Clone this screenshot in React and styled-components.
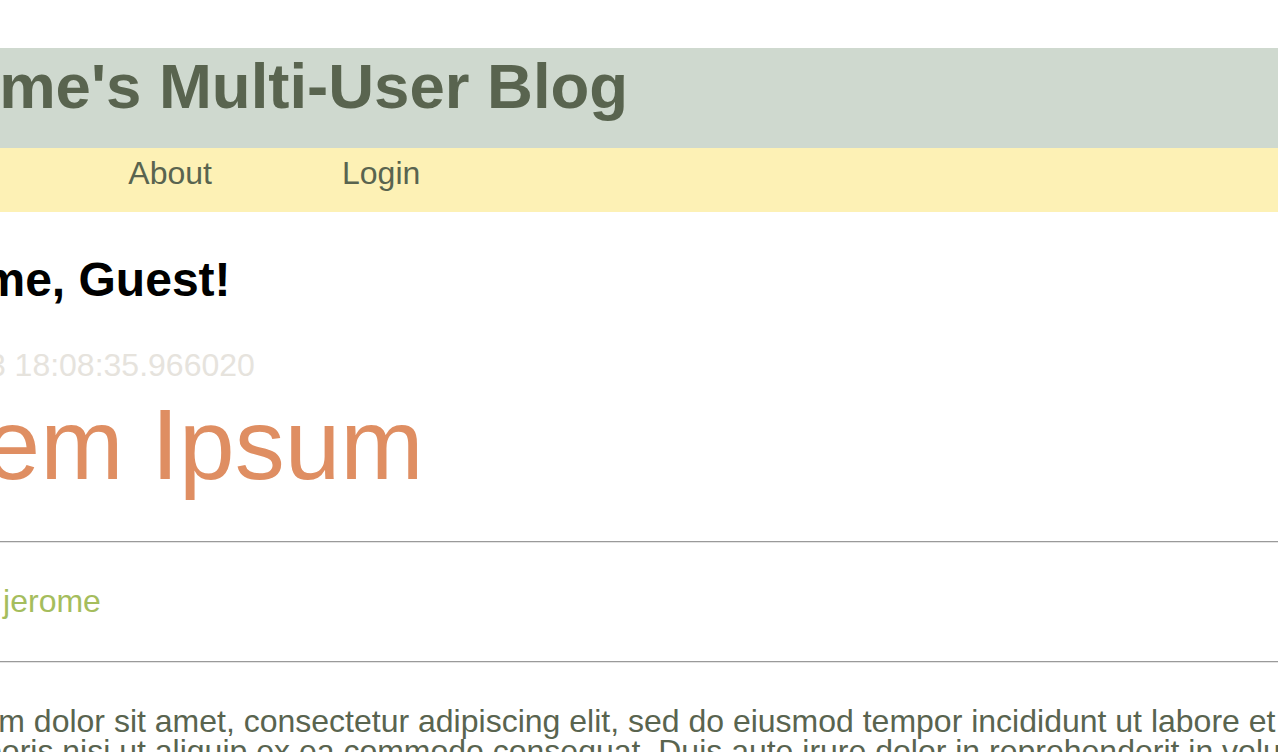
import React from 'react';
import styled, { createGlobalStyle } from 'styled-components';

const GlobalStyle = createGlobalStyle`
    html, body {
        margin: 0;
        padding: 0;
        background: #ffffff;
        overflow: hidden;
    }
    body {
        font-family: "Liberation Sans", Arial, Helvetica, sans-serif;
        color: #59644f;
    }
`;

const Frame = styled.div`
    margin-left: -160px;
    padding-top: 48px;
`;

const Header = styled.header`
    background-color: #cfd9cf;
    height: 100px;
    h1 {
        margin: 0;
        padding-left: 25px;
        font-size: 63.5px;
        line-height: 76px;
        font-weight: bold;
        color: #59644f;
        white-space: nowrap;
    }
`;

const Nav = styled.nav`
    background-color: #fdf1b5;
    height: 64px;
    ul {
        display: flex;
        align-items: flex-start;
        margin: 0;
        padding: 0 0 0 8px;
        list-style: none;
    }
`;

const NavItem = styled.li`
    padding: 0 65px;
    font-size: 32px;
    line-height: 50px;
    a {
        color: #59644f;
        text-decoration: none;
    }
`;

const Main = styled.main`
    padding-top: 38px;
`;

const Welcome = styled.h2`
    margin: 0;
    padding-left: 2px;
    font-size: 48px;
    line-height: 60px;
    font-weight: bold;
    color: #000000;
    white-space: nowrap;
`;

const Post = styled.article`
    margin-top: 35px;
`;

const PostDate = styled.div`
    padding-left: 2px;
    font-size: 32px;
    line-height: 40px;
    color: #e6e3dd;
    white-space: nowrap;
`;

const PostTitle = styled.h3`
    margin: 4px 0 0;
    font-size: 100px;
    line-height: 110px;
    font-weight: normal;
    color: #df8e62;
    white-space: nowrap;
`;

const Rule = styled.hr`
    margin: ${(p) => p.$top}px 0 0;
    height: 0;
    border: none;
    border-top: 1px solid #9a9a9a;
    border-bottom: 1px solid #e4e4e4;
`;

const Author = styled.div`
    margin-top: 38px;
    padding-left: 3px;
    font-size: 32px;
    line-height: 40px;
    color: #a5bd5d;
    white-space: nowrap;
`;

const Body = styled.p`
    margin: 43px 0 0;
    width: 2540px;
    font-size: 32px;
    line-height: 30px;
    color: #59644f;
`;

const lorem =
    'Lorem ipsum dolor sit amet, consectetur adipiscing elit, sed do eiusmod tempor incididunt ut labore et dolore magna aliqua. Ut enim ad minim veniam, quis nostrud exercitation ullamco laboris nisi ut aliquip ex ea commodo consequat. Duis aute irure dolor in reprehenderit in voluptate velit esse cillum dolore eu fugiat nulla pariatur. Excepteur sint occaecat cupidatat non proident, sunt in culpa qui officia deserunt mollit anim id est laborum.';

export default function App() {
    const links = ['Home', 'About', 'Login'];

    return (
        <>
            <GlobalStyle />
            <Frame>
                <Header>
                    <h1>Jerome's Multi-User Blog</h1>
                </Header>
                <Nav>
                    <ul>
                        {links.map((l) => (
                            <NavItem key={l}>
                                <a href="#">{l}</a>
                            </NavItem>
                        ))}
                    </ul>
                </Nav>
                <Main>
                    <Welcome>Welcome, Guest!</Welcome>
                    <Post>
                        <PostDate>2017-08-03 18:08:35.966020</PostDate>
                        <PostTitle>Lorem Ipsum</PostTitle>
                        <Rule $top={42} />
                        <Author>Posted by: jerome</Author>
                        <Rule $top={40} />
                        <Body>{lorem}</Body>
                    </Post>
                </Main>
            </Frame>
        </>
    );
}
